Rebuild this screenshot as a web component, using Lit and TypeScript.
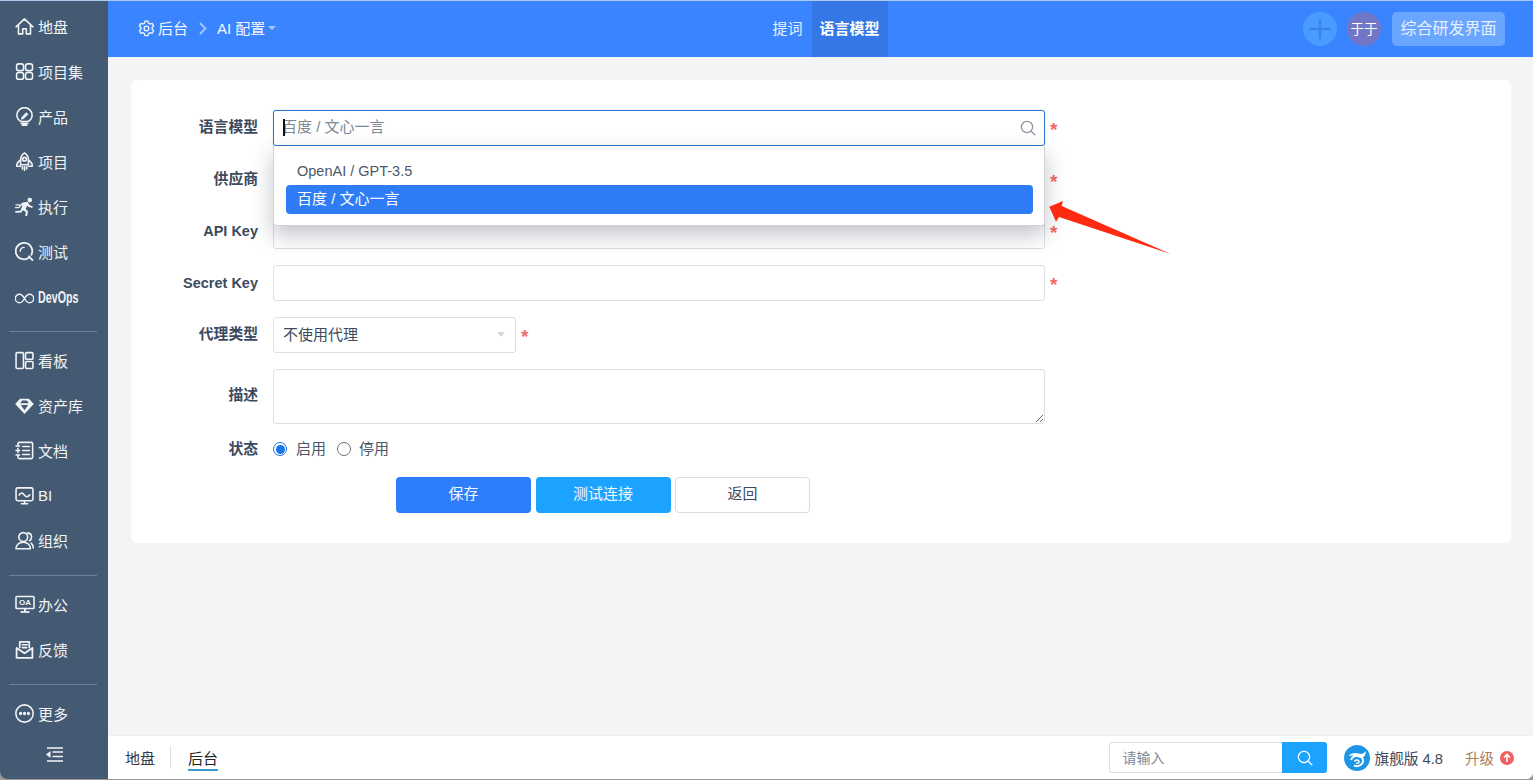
import { LitElement, html, css, svg } from "lit";
import { customElement } from "lit/decorators.js";

const ic = (body: unknown, size = 19, vb = "0 0 18 18") => html`<svg class="ic" width=${size} height=${size} viewBox=${vb} fill="none" stroke="currentColor" stroke-width="1.500" stroke-linecap="round" stroke-linejoin="round">${body}</svg>`;

const icons: Record<string, unknown> = {
  home: ic(svg`<path d="M1 9.300 9 1.800l8 7.500M3.300 7.800v8.200h4v-4.800h3.400V16h4V7.800"/>`),
  grid: ic(svg`<rect x="1.500" y="1.800" width="6.600" height="6.400" rx="2"/><rect x="10" y="1.800" width="6.600" height="6.400" rx="2"/><rect x="1.500" y="10" width="6.600" height="6.400" rx="2"/><rect x="10" y="10" width="6.600" height="6.400" rx="2"/>`),
  bulb: ic(svg`<path d="M5.800 13.700C3.300 12.500 1.800 10.200 1.800 7.800a7.200 7.200 0 0 1 14.400 0c0 2.400-1.500 4.700-4 5.900Z"/><path d="M6 15.500h6M7 17.200h4" stroke-width="1.700"/><path d="m6.200 9.600 4.500-4.700 2 1.900-4.600 4.600-2.400.6Z" fill="currentColor" stroke="none"/>`),
  rocket: ic(svg`<path d="M9 .9c2.600 1.700 3.700 4.200 3.700 6.800v4.300H5.300V7.700C5.300 5.100 6.400 2.600 9 .9Z"/><circle cx="9" cy="6.800" r="1.700"/><path d="M5.300 7.600C3 9 1.600 10.800 1.600 13.500h3.700M12.700 7.600C15 9 16.400 10.800 16.400 13.500h-3.700M7 14v2M9 14v3.400M11 14v2"/>`),
  run: ic(svg`<circle cx="14" cy="2.900" r="2.200" fill="currentColor" stroke="none"/><path d="M6.800 5.400 11.800 4.400l2.200 3.500 3 1-.6 1.600-3.800-1.200-1-1.100-1.500 3.200 2.300 2.200-1 4.600-1.800-.4.700-3.500-2.800-1.800-1.500 2.300-5.800.2.200-1.700 4.700-.2 2-5-1.300.3-1.500 2.100-1.400-.9Z" fill="currentColor" stroke="none"/><path d="M.8 7.400h3.600M.3 10h2.800" stroke-width="1.100"/>`),
  test: ic(svg`<path d="M13.400 14.700a7.800 7.800 0 1 1 2.100-2.600" stroke-width="1.700"/><path d="m13.300 13.600 3.200 3.500" stroke-width="1.800"/><path d="M5 8.600a3.800 3.800 0 0 1 3.600-3.500" stroke-width="1.400"/>`),
  inf: ic(svg`<path d="M9 9C7.600 6.500 6 5 4.300 5a4 4 0 0 0 0 8C6 13 7.600 11.500 9 9c1.400-2.500 3-4 4.700-4a4 4 0 0 1 0 8C12 13 10.400 11.500 9 9Z" stroke-width="1.300"/>`),
  board: ic(svg`<rect x="1" y="1.500" width="7" height="15" rx="1"/><rect x="10" y="1.500" width="7" height="6.300" rx="1"/><rect x="10" y="10" width="7" height="6.500" rx="1"/>`),
  gem: ic(svg`<path fill-rule="evenodd" d="M4.800 2.500h8.400L17.800 7.500 9 17 .200 7.500Zm1.900 1.800L5 6.800h8l-1.700-2.500ZM5.500 8.500 9 13.500l3.500-5Z" fill="currentColor" stroke="none"/>`),
  doc: ic(svg`<path d="M2.800 4V2.600A1.300 1.300 0 0 1 4.100 1.300h11.300a1.300 1.300 0 0 1 1.300 1.300v12.800a1.300 1.300 0 0 1-1.300 1.300H4.100a1.300 1.300 0 0 1-1.300-1.300V14M2.800 7v4"/><path d="M1 4.800h3.400M1 9h3.400M1 13.200h3.400M7.300 5.200h6.400M7.300 9h6.400M7.300 12.800h6.400"/>`),
  bi: ic(svg`<rect x="1" y="1.800" width="16" height="12.200" rx="1.600"/><path d="M4 8.500c1.600-2.400 3.200-2.400 4.800 0s3.200 2.200 5.200-.1M6 16.800h6M9 14v2.800"/>`),
  org: ic(svg`<circle cx="7.800" cy="5.700" r="4.200"/><path d="M1 16.800c0-3.600 2.800-6.200 6.800-6.200s6.800 2.600 6.800 6.200ZM12 1.800c2.300.4 3.700 2 3.700 3.900 0 1.500-.8 2.800-2 3.500M15.300 11.500c1.200 1 2 2.700 2 4.600"/>`),
  oa: html`<svg class="ic" width="20" height="19" viewBox="0 0 20 19" fill="none" stroke="currentColor" stroke-width="1.600"><rect x="1" y="1.500" width="18" height="12" rx=".8"/><path d="M10 13.500v3" stroke-width="2"/><path d="M5.500 17h9" stroke-width="1.700"/><text x="10" y="10.300" text-anchor="middle" font-family="Liberation Sans" font-size="8" font-weight="700" fill="currentColor" stroke="none">OA</text></svg>`,
  mail: ic(svg`<path d="M4.500 7V1.800h9V7M7 4.500h4.500M7 7.200h4" stroke-width="1.600"/><path d="M1.500 7.500v9.500h15V7.500L9 12.500Z" stroke-width="1.700"/>`),
  more: ic(svg`<circle cx="9" cy="9" r="8.200"/><circle cx="5.300" cy="9" r=".8" fill="currentColor"/><circle cx="9" cy="9" r=".8" fill="currentColor"/><circle cx="12.700" cy="9" r=".8" fill="currentColor"/>`),
};

const menu1 = [["home", "地盘"], ["grid", "项目集"], ["bulb", "产品"], ["rocket", "项目"], ["run", "执行"], ["test", "测试"]];
const menu2 = [["board", "看板"], ["gem", "资产库"], ["doc", "文档"], ["bi", "BI"], ["org", "组织"]];
const menu3 = [["oa", "办公"], ["mail", "反馈"]];

const search = (size: number) => html`<svg width=${size} height=${size} viewBox="0 0 16 16" fill="none" stroke="currentColor" stroke-width="1.300" stroke-linecap="round"><circle cx="7" cy="7" r="5.600"/><path d="m11.200 11.200 3.600 3.600"/></svg>`;

@customElement("app-root")
export class AppRoot extends LitElement {
  static styles = css`
    :host { display: block; width: 1533px; height: 780px; background: #9a9a9a; font-family: "Liberation Sans", "Noto Sans CJK SC", sans-serif; font-size: 15px; color: #3c4a5e; }
    .window { position: relative; width: 1533px; height: 779px; display: flex; overflow: hidden; border-radius: 0 0 7px 7px; background: #f3f4f6; }
    .top-line { position: absolute; left: 0; right: 0; top: 0; height: 1px; background: #a9c9ee; z-index: 5; }

    .side { width: 108px; flex: none; background: #445a72; color: #f1f4f7; display: flex; flex-direction: column; padding-top: 4px; box-sizing: border-box; }
    .item { height: 45px; flex: none; box-sizing: border-box; display: flex; align-items: center; padding-left: 15px; gap: 4px; white-space: nowrap; }
    .item .ic { flex: none; }
    .item span { padding-bottom: 1px; }
    .item.wide { padding-left: 15px; gap: 3px; }
    .devops { height: 45px; padding-top: 4px; gap: 4px; }
    .devops span { display: inline-block; font-weight: 700; font-size: 17px; transform: scaleX(.63); transform-origin: left center; }
    .rule { height: 1px; background: #6b809a; margin: 12px 11px 6px 9px; flex: none; }
    .collapse { display: flex; justify-content: center; margin-top: 11px; padding-left: 1px; }

    .main { flex: 1; min-width: 0; display: flex; flex-direction: column; }
    .head { height: 57px; flex: none; background: #3a85ff; color: #fff; display: grid; grid-template-columns: 1fr auto 1fr; align-items: center; padding: 0 28px 0 30px; }
    .crumb { display: flex; align-items: center; color: #f2f7ff; }
    .crumb svg { flex: none; }
    .crumb span { padding-bottom: 3px; }
    .crumb .t1 { margin-left: 3px; }
    .crumb .chev { margin: 0 10px 0 11px; color: #a4c8ff; }
    .crumb .caret { width: 0; height: 0; padding: 0; border: 4px solid transparent; border-top: 4px solid #a4c8ff; border-bottom: 0; margin: 0 0 2px 3px; }
    .tabs { display: flex; align-self: stretch; margin-left: 8px; }
    .tab { display: flex; align-items: center; box-sizing: border-box; padding: 0 9px 3px; color: #e6f0ff; font-size: 15px; }
    .tab.on { background: #3477e5; color: #fff; font-weight: 700; padding: 0 8px 3px; }
    .tools { display: flex; justify-content: flex-end; align-items: center; }
    .plus { width: 34px; height: 34px; border-radius: 50%; background: #4a9bff; color: #3b83e6; display: flex; align-items: center; justify-content: center; }
    .avatar { width: 34px; height: 34px; box-sizing: border-box; padding-bottom: 2px; border-radius: 50%; background: #7276c6; color: #fff; font-size: 13.500px; display: flex; align-items: center; justify-content: center; margin-left: 10px; }
    .brand { margin-left: 11px; width: 113px; height: 34px; box-sizing: border-box; padding-bottom: 3px; border-radius: 5px; background: #6aa5ff; color: #e6f0ff; font-size: 16px; display: flex; align-items: center; justify-content: center; }

    .content { flex: 1; min-height: 0; padding: 23px 22px 0 23px; }
    .card { position: relative; background: #fff; border-radius: 6px; padding: 30px 0; display: flex; flex-direction: column; gap: 16px; }
    .row { display: flex; align-items: center; min-height: 35.750px; }
    .label { width: 127px; height: 20px; flex: none; text-align: right; margin-right: 15px; font-weight: 700; color: #3c4a5e; font-size: 14.500px; line-height: 20px; white-space: nowrap; }
    .label.cjk { font-size: 14.800px; line-height: 18px; }
    .field { width: 772px; height: 35.750px; box-sizing: border-box; border: 1px solid #dcdfe3; border-radius: 3px; background: #fff; display: flex; align-items: center; padding: 0 9px; flex: none; font: inherit; color: #3c4a5e; outline: none; }
    .field.focus { border-color: #2e78cc; box-shadow: 0 0 2px rgba(46,120,204,.3); justify-content: space-between; color: #7e8794; position: relative; }
    .field.focus .val { margin: 0 0 4px -1px; }
    .cursor { position: absolute; left: 9px; top: 8px; width: 2px; height: 17px; background: #111; }
    .mag { color: #8d95a0; display: flex; margin-right: -1px; }
    .req { color: #f06a6a; margin-left: 5px; font-size: 19px; font-weight: 700; line-height: 1; padding-top: 3px; }
    .field.sel { width: 243px; justify-content: space-between; padding-right: 10px; }
    .sel .val { padding-bottom: 2px; }
    .selcaret { width: 0; height: 0; border: 4.500px solid transparent; border-top: 5px solid #d3d6da; border-bottom: 0; }
    textarea.field { height: 55px; display: block; resize: vertical; padding: 6px 9px; }
    .radios { display: flex; align-items: center; color: #4d5868; height: 20px; line-height: 18px; box-sizing: border-box; padding-bottom: 1px; }
    .rowr { min-height: 20px; }
    .radio { width: 14px; height: 14px; box-sizing: border-box; border-radius: 50%; border: 1px solid #6f6f6f; background: #fff; flex: none; margin-right: 9px; }
    .radio.off { margin-right: 8px; }
    .radio.on { border: 1.500px solid #1a73e8; position: relative; }
    .radio.on::after { content: ""; position: absolute; inset: 1.500px; background: #1a73e8; border-radius: 50%; }
    .radios .gap { margin-right: 11px; }
    .btns { display: flex; gap: 4.500px; margin: 1px 0 0 265px; }
    .btn { width: 135px; height: 36px; box-sizing: border-box; border-radius: 4px; border: 0; padding-bottom: 1px; display: flex; align-items: center; justify-content: center; color: #f4f8ff; font-size: 15px; line-height: 20px; }
    .b1 { background: #2e7dfa; }
    .b2 { background: #1ca3ff; }
    .b3 { background: #fff; border: 1px solid #d9dce0; color: #3c4a5e; }

    .drop { position: absolute; left: 142px; top: 66px; width: 772px; height: 80px; box-sizing: border-box; background: #fff; border: 1px solid #d0d2d5; border-top: 0; border-radius: 0 0 4px 4px; box-shadow: 0 9px 22px rgba(30,40,60,.28); padding: 11px 11px 0 12px; z-index: 3; display: flex; flex-direction: column; }
    .opt { height: 28px; box-sizing: border-box; display: flex; align-items: center; padding: 0 0 1px 11px; color: #4d5868; font-size: 14.500px; border-radius: 4px; }
    .opt.on { height: 29px; padding-bottom: 4px; background: #2e7df7; color: #fff; font-size: 15px; }
    .arrow { position: absolute; left: 0; top: 0; pointer-events: none; z-index: 4; }

    .foot { height: 43px; flex: none; background: #fff; border-top: 1px solid #eceef0; display: flex; align-items: center; padding: 0 19px 0 17px; }
    .ft { position: relative; color: #333c48; }
    .ft.on::after { content: ""; position: absolute; left: 0; right: 0; bottom: -3px; height: 2px; background: #3a9bd0; }
    .ft.on { color: #222; }
    .vbar { width: 1px; height: 23px; background: #dcdfe3; margin: 0 17px 0 15px; }
    .spacer { flex: 1; }
    .sbox { width: 173px; height: 31px; box-sizing: border-box; border: 1px solid #dcdfe3; border-right: 0; border-radius: 3px 0 0 3px; display: flex; align-items: center; padding: 0 0 1px 12px; color: #7e8794; font-size: 14px; }
    .sbtn { width: 45px; height: 31px; background: #1ca3ff; border-radius: 0 3px 3px 0; color: #fff; display: flex; align-items: center; justify-content: center; }
    .logo { margin-left: 17px; flex: none; }
    .ver { margin-left: 4px; color: #3c4a5e; font-size: 14.700px; white-space: nowrap; }
    .up { margin-left: 22px; color: #a8805c; font-size: 14.500px; }
    .dot { width: 14px; height: 14px; margin-left: 6px; flex: none; }
  `;

  private item(i: string[]) {
    return html`<div class="item ${i[0] === "oa" ? "wide" : ""}">${icons[i[0]]}<span>${i[1]}</span></div>`;
  }

  render() {
    return html`<div class="window">
      <div class="top-line"></div>
      <aside class="side">
        ${menu1.map((i) => this.item(i))}
        <div class="item devops">${icons.inf}<span>DevOps</span></div>
        <div class="rule"></div>
        ${menu2.map((i) => this.item(i))}
        <div class="rule"></div>
        ${menu3.map((i) => this.item(i))}
        <div class="rule"></div>
        <div class="item">${icons.more}<span>更多</span></div>
        <div class="collapse"><svg width="17" height="15" viewBox="0 0 17 15" fill="none" stroke="currentColor" stroke-width="1.700"><path d="M1 1h16M6.500 5h10.500M6.500 9.500h10.500M1 14h16"/><path d="M0 7.500l4.500-3.500v7Z" fill="currentColor" stroke="none"/></svg></div>
      </aside>
      <div class="main">
        <header class="head">
          <div class="crumb">
            <svg width="17" height="17" viewBox="0 0 16 16" fill="none" stroke="currentColor" stroke-width="1.250" stroke-linejoin="round"><path d="M6.600 1h2.800l.5 1.900 1.500.9 1.900-.6 1.400 2.400-1.400 1.300v1.800l1.400 1.400-1.400 2.400-1.900-.6-1.500.9-.5 1.900H6.600l-.5-1.900-1.500-.9-1.900.6L1.300 10.100l1.400-1.300V7L1.300 5.600l1.400-2.400 1.900.6 1.500-.9Z"/><circle cx="8" cy="8" r="2.200"/></svg>
            <span class="t1">后台</span>
            <svg class="chev" width="8" height="13" viewBox="0 0 8 13" fill="none" stroke="currentColor" stroke-width="1.800"><path d="m1 1 5.500 5.500L1 12"/></svg>
            <span>AI 配置</span><span class="caret"></span>
          </div>
          <nav class="tabs"><div class="tab">提词</div><div class="tab on">语言模型</div></nav>
          <div class="tools">
            <div class="plus"><svg width="20" height="20" viewBox="0 0 20 20" stroke="currentColor" stroke-width="2.400"><path d="M10 0v20M0 10h20"/></svg></div>
            <div class="avatar">于于</div>
            <div class="brand">综合研发界面</div>
          </div>
        </header>
        <div class="content">
          <section class="card">
            <div class="row"><div class="label cjk">语言模型</div>
              <div class="field focus"><span class="cursor"></span><span class="val">百度 / 文心一言</span><span class="mag">${search(16)}</span></div><span class="req">*</span></div>
            <div class="row"><div class="label cjk">供应商</div><div class="field"></div><span class="req">*</span></div>
            <div class="row"><div class="label">API Key</div><div class="field"></div><span class="req">*</span></div>
            <div class="row"><div class="label">Secret Key</div><div class="field"></div><span class="req">*</span></div>
            <div class="row"><div class="label cjk">代理类型</div><div class="field sel"><span class="val">不使用代理</span><span class="selcaret"></span></div><span class="req">*</span></div>
            <div class="row"><div class="label cjk">描述</div><textarea class="field"></textarea></div>
            <div class="row rowr"><div class="label cjk">状态</div><div class="radios"><span class="radio on"></span><span class="gap">启用</span><span class="radio off"></span><span>停用</span></div></div>
            <div class="btns"><div class="btn b1">保存</div><div class="btn b2">测试连接</div><div class="btn b3">返回</div></div>
            <div class="drop"><div class="opt">OpenAI / GPT-3.5</div><div class="opt on">百度 / 文心一言</div></div>
          </section>
        </div>
        <footer class="foot">
          <span class="ft">地盘</span><span class="vbar"></span><span class="ft on">后台</span>
          <span class="spacer"></span>
          <div class="sbox">请输入</div><div class="sbtn">${search(16)}</div>
          <svg class="logo" width="26" height="26" viewBox="0 0 26 26"><circle cx="13" cy="13" r="13" fill="#1e96e6"/><path d="M4.500 11C7 8 11 7.200 14.500 8.500c3 1 5.500.5 7-2.500.8 4.300-1.800 7-5.500 7-3.500-2-7.500-3.400-11.500-2Z" fill="#fff"/><path d="M7 15a6.500 6.500 0 0 1 12-.3c.8 4.300-4.500 8-9 5.800" fill="none" stroke="#fff" stroke-width="2"/><path d="M10.500 16.500c.8-2.300 4.700-2 4.500.3-.2 1.500-2 1.800-2.700.9" fill="none" stroke="#fff" stroke-width="1.500"/></svg>
          <span class="ver">旗舰版 4.8</span>
          <span class="up">升级</span>
          <svg class="dot" viewBox="0 0 14 14"><circle cx="7" cy="7" r="7" fill="#f06060"/><path d="M7 11V4M4 6.500 7 3.500l3 3" fill="none" stroke="#fff" stroke-width="1.700"/></svg>
        </footer>
      </div>
      <svg class="arrow" width="1533" height="779"><polygon points="1049.300,206.700 1063,201 1061.700,206 1170.700,254 1059,217 1056,221.700" fill="#ff2a12"/></svg>
    </div>`;
  }
}
